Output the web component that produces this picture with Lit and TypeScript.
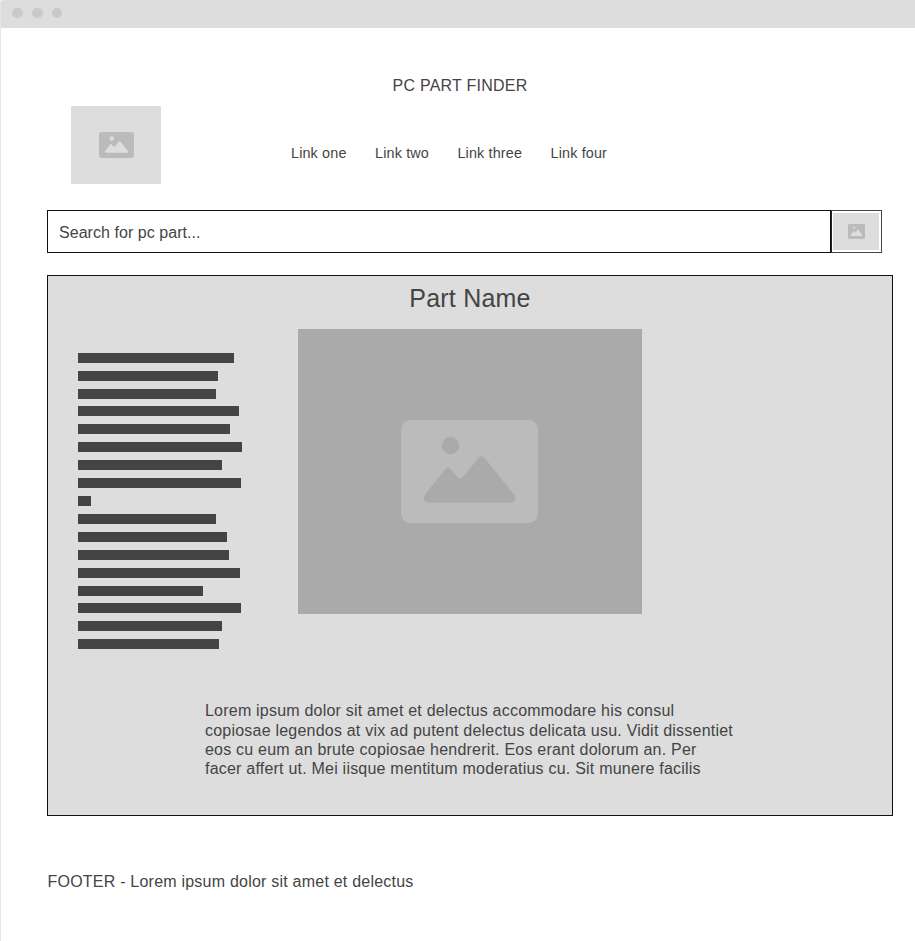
import { LitElement, html, css } from "lit";
import { customElement } from "lit/decorators.js";
import { styleMap } from "lit/directives/style-map.js";

@customElement("picture-icon")
class PictureIcon extends LitElement {
  static styles = css`
    :host { display: block; }
    .icon { display: block; width: 100%; height: 100%; }
    .frame { fill: var(--frame, #bbb); }
    .scene { fill: var(--scene, #ddd); }
  `;

  render() {
    return html`
      <svg class="icon" viewBox="0 0 137 103" preserveAspectRatio="none">
        <rect class="frame" width="137" height="103" rx="9.5" />
        <circle class="scene" cx="49.6" cy="25.6" r="8.7" />
        <path
          class="scene"
          d="M24 74.5L44 49.5Q47 45.5 50 49.5L56.5 57Q59.3 60 62 57L77.5 38Q80.5 34.5 83.5 38L113 74.5Q116 79.5 111.5 82.5H27Q20.5 81.5 24 74.5Z"
        />
      </svg>
    `;
  }
}

@customElement("app-root")
class AppRoot extends LitElement {
  static styles = css`
    :host {
      display: block;
      box-sizing: border-box;
      height: 941px;
      overflow: hidden;
      border-left: 1px solid #e6e6e6;
      background: #fff;
      color: #444;
      font: 16px/19px "Liberation Sans", Arial, sans-serif;
    }
    .titlebar {
      display: flex;
      align-items: center;
      gap: 9px;
      height: 28px;
      box-sizing: border-box;
      padding: 0 0 2px 11px;
      background: #ddd;
      border-top-left-radius: 3px;
    }
    .dot { width: 11px; height: 10px; border-radius: 50%; background: #c9c9c9; }
    .dot:last-child { width: 10px; }
    .header { display: flex; height: 182px; }
    .logo {
      display: grid;
      place-content: center;
      width: 90px;
      height: 78px;
      margin: 78px 0 0 70px;
      background: #ddd;
    }
    .logo-icon { width: 35px; height: 26px; }
    .heading { margin: 48px 0 0 130px; }
    .brand {
      margin: 0 0 0 101.5px;
      font-size: 16px;
      font-weight: 400;
      line-height: 20px;
      letter-spacing: 0.25px;
    }
    .links {
      display: flex;
      gap: 28.5px;
      margin-top: 47px;
      font-size: 14.4px;
      line-height: 20px;
      letter-spacing: 0.14px;
    }
    .search { display: flex; height: 43px; margin-left: 46px; }
    .field {
      box-sizing: border-box;
      width: 784px;
      border: 1px solid #111;
      padding: 12px 11px 0;
      line-height: 20px;
      letter-spacing: 0.05px;
    }
    .submit {
      box-sizing: border-box;
      width: 51px;
      border: 1px solid #444;
      border-left-color: #222;
      padding: 2px 2px 2px 1px;
    }
    .submit-fill { display: grid; place-content: center; height: 37px; background: #ddd; }
    .submit-icon { width: 17px; height: 15px; }
    .panel {
      display: grid;
      grid-template-columns: 250px 344px 1fr;
      grid-template-rows: 53px 285px 1fr;
      box-sizing: border-box;
      width: 846px;
      height: 541px;
      margin: 22px 0 0 46px;
      border: 1px solid #111;
      background: #ddd;
    }
    .part-name {
      grid-column: 2;
      margin: 7px 0 0;
      text-align: center;
      font-size: 25px;
      font-weight: 400;
      line-height: 30px;
      letter-spacing: 0.2px;
    }
    .lines {
      grid-column: 1;
      grid-row: 2 / 4;
      display: flex;
      flex-direction: column;
      gap: 7.90625px;
      padding: 23.75px 0 0 30px;
    }
    .line { flex: none; height: 10px; background: #444; }
    .photo {
      grid-column: 2;
      grid-row: 2;
      display: grid;
      place-content: center;
      padding-right: 1px;
      background: #aaa;
      --scene: #aaa;
    }
    .photo-icon { width: 137px; height: 103px; }
    .copy {
      grid-column: 1 / 4;
      grid-row: 3;
      margin: 87.3px 0 0 157px;
      line-height: 19.3px;
      letter-spacing: 0.215px;
      white-space: nowrap;
    }
    .footer { margin: 56px 0 0 46.5px; line-height: 20px; letter-spacing: 0.22px; }
  `;

  private lineWidths = [156, 140, 138, 161, 152, 164, 144, 163, 13, 138, 149, 151, 162, 125, 163, 144, 141];

  private links = ["Link one", "Link two", "Link three", "Link four"];

  private copy = [
    "Lorem ipsum dolor sit amet et delectus accommodare his consul",
    "copiosae legendos at vix ad putent delectus delicata usu. Vidit dissentiet",
    "eos cu eum an brute copiosae hendrerit. Eos erant dolorum an. Per",
    "facer affert ut. Mei iisque mentitum moderatius cu. Sit munere facilis",
  ];

  render() {
    return html`
      <div class="titlebar">
        <span class="dot"></span><span class="dot"></span><span class="dot"></span>
      </div>
      <header class="header">
        <div class="logo"><picture-icon class="logo-icon"></picture-icon></div>
        <div class="heading">
          <h1 class="brand">PC PART FINDER</h1>
          <nav class="links">${this.links.map((l) => html`<span>${l}</span>`)}</nav>
        </div>
      </header>
      <div class="search">
        <div class="field">Search for pc part...</div>
        <div class="submit">
          <div class="submit-fill"><picture-icon class="submit-icon"></picture-icon></div>
        </div>
      </div>
      <main class="panel">
        <h2 class="part-name">Part Name</h2>
        <div class="lines">
          ${this.lineWidths.map((w) => html`<div class="line" style=${styleMap({ width: `${w}px` })}></div>`)}
        </div>
        <div class="photo"><picture-icon class="photo-icon"></picture-icon></div>
        <div class="copy">${this.copy.map((t) => html`<div>${t}</div>`)}</div>
      </main>
      <footer class="footer">FOOTER - Lorem ipsum dolor sit amet et delectus</footer>
    `;
  }
}
